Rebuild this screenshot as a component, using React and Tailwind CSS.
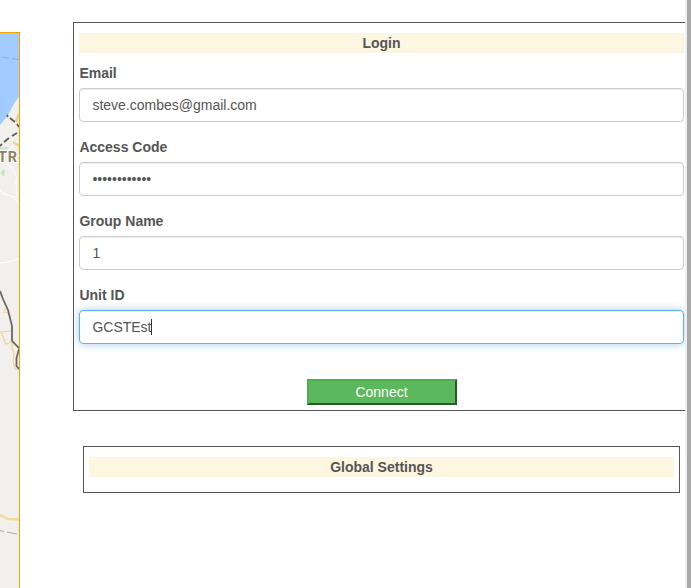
import React from 'react';

function MapEdge() {
  return (
    <div className="mt-8 h-[556px] w-5 shrink-0 overflow-hidden border-t border-r border-[#f5a300] bg-[#f2f0ec]">
      <svg width="19" height="555" viewBox="0 33 19 555" fill="none" className="block">
        <path d="M0 33H19V97L15 102L9 113L5 119L0 125Z" fill="#a2cbff" />
        <path d="M2 57.5L9 58M12 58.5L19 59.5" stroke="#80b0ef" />
        <path d="M6 163L12 168L16 175L18 180M10 150L15 143L19 141" stroke="#fff" />
        <path d="M0 148C3 150 6 146 8 149M1 174L4 170L3 176" stroke="#c6e5c0" strokeWidth="2" />
        <path d="M7 115L8 117M10 118L15 122M17 124L19 127M0 146L2 144M4 142L9 138M12 136L17 133" stroke="#5d5d5d" strokeWidth="1.8" />
        <path d="M16 122L18 116L19 118M13 142L19 146" stroke="#ead49a" strokeWidth="2.5" />
        <text x="-2" y="162" fill="#8d8068" stroke="#fff" strokeWidth="2" paintOrder="stroke" fontFamily="Roboto, sans-serif" fontSize="14.5" fontWeight="700" letterSpacing="0.8">TR</text>
        <path d="M0 190L2 193L13 197L19 203M16 180L16.5 196L13 197M0 263L8 262L19 259" stroke="#fff" strokeWidth="1.2" />
        <path d="M6 308L4 312L8 313M12 328L11 331L1 332L6 344L12 342L12 348L14 354L13 361L15 369L19 370" stroke="#edd596" strokeWidth="1.2" />
        <path d="M0 291L3 299L8 310L12 326L12 341L19 348M19 349L16.5 358L16.5 366L19 369" stroke="#686868" strokeWidth="1.8" />
        <path d="M0 515L4 517L8 519L19 519.5" stroke="#f1da95" strokeWidth="2.5" />
        <path d="M0 530.5L4 531.5M7 532L17 534" stroke="#aaa" strokeWidth="1.2" />
      </svg>
    </div>
  );
}

function PanelTitle({ children }) {
  return <h2 className="h-5 bg-[#fdf7e2] text-center font-bold">{children}</h2>;
}

function Field({ label, value, focused }) {
  return (
    <div className="mb-[15px]">
      <div className="mb-[5px] pl-[0.4px] font-bold">{label}</div>
      <div
        className={
          focused
            ? 'flex h-[34px] items-center rounded-[4px] border border-[#66afe9] px-[12.4px] shadow-[inset_0_1px_1px_rgba(0,0,0,0.075),0_0_8px_rgba(102,175,233,0.6)]'
            : 'flex h-[34px] items-center rounded-[4px] border border-[#ccc] px-[12.4px] shadow-[inset_0_1px_1px_rgba(0,0,0,0.075)]'
        }
      >
        <span>{value}</span>
        {focused && <span className="-ml-[0.5px] h-4 w-px bg-[#333]" />}
      </div>
    </div>
  );
}

export default function App() {
  return (
    <div className="flex h-[588px] w-[691px] overflow-hidden bg-white font-['Liberation_Sans',Arial,sans-serif] text-[14px] leading-5 text-[#555]">
      <MapEdge />
      <main className="ml-[53px] w-[612px] shrink-0 pt-[22px]">
        <section className="h-[389px] border-y border-l border-[#555] pt-[10px] pr-px pl-[5px]">
          <div className="mb-[10px]">
            <PanelTitle>Login</PanelTitle>
          </div>
          <Field label="Email" value="steve.combes@gmail.com" />
          <Field label="Access Code" value="••••••••••••" />
          <Field label="Group Name" value="1" />
          <Field label="Unit ID" value="GCSTEst" focused />
          <button className="mx-auto mt-[35px] block h-[26px] w-[150px] border-2 border-t-[#4cae4c] border-r-[#265a26] border-b-[#265a26] border-l-[#4cae4c] bg-[#5cb85c] text-center text-white">
            Connect
          </button>
        </section>
        <section className="mt-[35px] mr-[5px] ml-[10px] h-[47px] border border-[#555] px-[5px] pt-[10px]">
          <PanelTitle>Global Settings</PanelTitle>
        </section>
      </main>
      <div className="w-[2px] shrink-0 bg-[#f0f0f0]" />
      <div className="w-1 shrink-0 bg-[#a8a8a8]" />
    </div>
  );
}
